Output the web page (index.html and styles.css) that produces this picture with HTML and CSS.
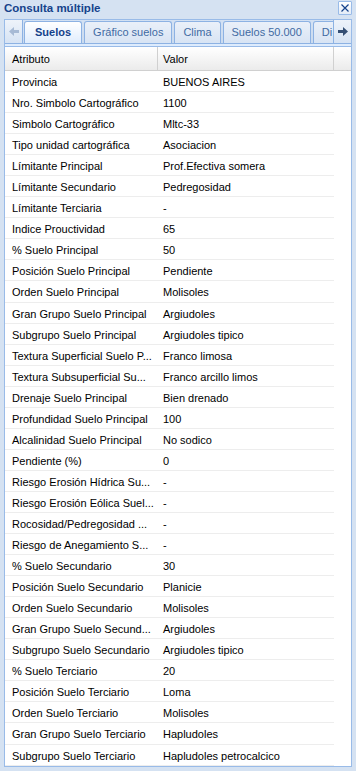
FILE: index.html
```html
<!DOCTYPE html>
<html lang="es">
<head>
  <meta charset="UTF-8" />
  <meta name="viewport" content="width=device-width, initial-scale=1.0"/>
  <title>Consulta múltiple</title>
  <link rel="stylesheet" href="styles.css">
</head>
<body>
  <div class="window">
    <div class="window-header">
      <span class="window-title">Consulta múltiple</span>
      <button class="tool-close" title="Cerrar">
        <svg width="12" height="12" viewBox="0 0 12 12">
          <path d="M2.5 2.5 L9.5 9.5 M9.5 2.5 L2.5 9.5" stroke="#15428b" stroke-width="1.2" fill="none"/>
        </svg>
      </button>
    </div>

    <div class="tabpanel">
      <div class="tab-strip">
        <div class="tab-scroller scroller-left disabled">
          <svg width="10" height="9" viewBox="0 0 10 9"><path d="M0 4.5 L5 0 V3 H10 V6 H5 V9 Z"/></svg>
        </div>
        <ul class="tabs">
          <li class="tab active">Suelos</li>
          <li class="tab">Gráfico suelos</li>
          <li class="tab">Clima</li>
          <li class="tab">Suelos 50.000</li>
          <li class="tab">Di</li>
        </ul>
        <div class="tab-scroller scroller-right">
          <svg width="10" height="9" viewBox="0 0 10 9"><path d="M10 4.5 L5 0 V3 H0 V6 H5 V9 Z"/></svg>
        </div>
      </div>
      <div class="tab-spacer"></div>

      <div class="grid">
        <div class="grid-header">
          <div class="hd col-attr">Atributo</div>
          <div class="hd col-value">Valor</div>
          <div class="hd col-fill"></div>
        </div>
        <div class="grid-body">
          <div class="grid-row"><div class="cell col-attr">Provincia</div><div class="cell col-value">BUENOS AIRES</div></div>
          <div class="grid-row"><div class="cell col-attr">Nro. Simbolo Cartográfico</div><div class="cell col-value">1100</div></div>
          <div class="grid-row"><div class="cell col-attr">Simbolo Cartográfico</div><div class="cell col-value">Mltc-33</div></div>
          <div class="grid-row"><div class="cell col-attr">Tipo unidad cartográfica</div><div class="cell col-value">Asociacion</div></div>
          <div class="grid-row"><div class="cell col-attr">Límitante Principal</div><div class="cell col-value">Prof.Efectiva somera</div></div>
          <div class="grid-row"><div class="cell col-attr">Límitante Secundario</div><div class="cell col-value">Pedregosidad</div></div>
          <div class="grid-row"><div class="cell col-attr">Límitante Terciaria</div><div class="cell col-value">-</div></div>
          <div class="grid-row"><div class="cell col-attr">Indice Prouctividad</div><div class="cell col-value">65</div></div>
          <div class="grid-row"><div class="cell col-attr">% Suelo Principal</div><div class="cell col-value">50</div></div>
          <div class="grid-row"><div class="cell col-attr">Posición Suelo Principal</div><div class="cell col-value">Pendiente</div></div>
          <div class="grid-row"><div class="cell col-attr">Orden Suelo Principal</div><div class="cell col-value">Molisoles</div></div>
          <div class="grid-row"><div class="cell col-attr">Gran Grupo Suelo Principal</div><div class="cell col-value">Argiudoles</div></div>
          <div class="grid-row"><div class="cell col-attr">Subgrupo Suelo Principal</div><div class="cell col-value">Argiudoles tipico</div></div>
          <div class="grid-row"><div class="cell col-attr">Textura Superficial Suelo P...</div><div class="cell col-value">Franco limosa</div></div>
          <div class="grid-row"><div class="cell col-attr">Textura Subsuperficial Su...</div><div class="cell col-value">Franco arcillo limos</div></div>
          <div class="grid-row"><div class="cell col-attr">Drenaje Suelo Principal</div><div class="cell col-value">Bien drenado</div></div>
          <div class="grid-row"><div class="cell col-attr">Profundidad Suelo Principal</div><div class="cell col-value">100</div></div>
          <div class="grid-row"><div class="cell col-attr">Alcalinidad Suelo Principal</div><div class="cell col-value">No sodico</div></div>
          <div class="grid-row"><div class="cell col-attr">Pendiente (%)</div><div class="cell col-value">0</div></div>
          <div class="grid-row"><div class="cell col-attr">Riesgo Erosión Hídrica Su...</div><div class="cell col-value">-</div></div>
          <div class="grid-row"><div class="cell col-attr">Riesgo Erosión Eólica Suel...</div><div class="cell col-value">-</div></div>
          <div class="grid-row"><div class="cell col-attr">Rocosidad/Pedregosidad ...</div><div class="cell col-value">-</div></div>
          <div class="grid-row"><div class="cell col-attr">Riesgo de Anegamiento S...</div><div class="cell col-value">-</div></div>
          <div class="grid-row"><div class="cell col-attr">% Suelo Secundario</div><div class="cell col-value">30</div></div>
          <div class="grid-row"><div class="cell col-attr">Posición Suelo Secundario</div><div class="cell col-value">Planicie</div></div>
          <div class="grid-row"><div class="cell col-attr">Orden Suelo Secundario</div><div class="cell col-value">Molisoles</div></div>
          <div class="grid-row"><div class="cell col-attr">Gran Grupo Suelo Secund...</div><div class="cell col-value">Argiudoles</div></div>
          <div class="grid-row"><div class="cell col-attr">Subgrupo Suelo Secundario</div><div class="cell col-value">Argiudoles tipico</div></div>
          <div class="grid-row"><div class="cell col-attr">% Suelo Terciario</div><div class="cell col-value">20</div></div>
          <div class="grid-row"><div class="cell col-attr">Posición Suelo Terciario</div><div class="cell col-value">Loma</div></div>
          <div class="grid-row"><div class="cell col-attr">Orden Suelo Terciario</div><div class="cell col-value">Molisoles</div></div>
          <div class="grid-row"><div class="cell col-attr">Gran Grupo Suelo Terciario</div><div class="cell col-value">Hapludoles</div></div>
          <div class="grid-row"><div class="cell col-attr">Subgrupo Suelo Terciario</div><div class="cell col-value">Hapludoles petrocalcico</div></div>
        </div>
      </div>
    </div>
  </div>
</body>
</html>
```

FILE: styles.css
```css
body {
  margin: 0;
  font-family: 'Liberation Sans', Arial, sans-serif;
  font-size: 11px;
  color: #000;
}

.window {
  width: 356px;
  height: 771px;
  box-sizing: border-box;
  padding: 0 4px 4px 4px;
  background-color: #d5e2f2;
  display: flex;
  flex-direction: column;
  overflow: hidden;
}

/* title bar */
.window-header {
  height: 19px;
  display: flex;
  justify-content: space-between;
  align-items: flex-start;
}

.window-title {
  font-size: 11.5px;
  font-weight: bold;
  color: #15428b;
  line-height: 17px;
}

.tool-close {
  width: 14px;
  height: 14px;
  margin-top: 1px;
  padding: 0;
  border: 1px solid #99bbe8;
  border-radius: 1px;
  background: linear-gradient(#ffffff, #e3ecf8);
  display: flex;
  align-items: center;
  justify-content: center;
}

/* tab panel */
.tabpanel {
  flex: 1;
  display: flex;
  flex-direction: column;
  border: 1px solid #99bbe8;
  min-height: 0;
}

.tab-strip {
  height: 23px;
  display: flex;
  background: linear-gradient(#d3e1f3, #cbdbef);
  border-bottom: 1px solid #8db2e3;
}

.tab-scroller {
  width: 17px;
  flex: none;
  display: flex;
  align-items: center;
  justify-content: center;
  background: linear-gradient(#eef3fa, #d6e3f4);
  padding-bottom: 1px;
  position: relative;
  z-index: 1;
}

.scroller-left {
  border-right: 1px solid #8db2e3;
}

.scroller-right {
  border-left: 1px solid #8db2e3;
  fill: #354f74;
}

.tab-scroller.disabled {
  fill: #a7bad5;
}

.tabs {
  list-style: none;
  margin: 0;
  padding: 0 0 0 1px;
  flex: 1;
  display: flex;
  align-items: flex-end;
  gap: 2px;
  overflow: hidden;
  white-space: nowrap;
}

.tab {
  height: 21px;
  line-height: 20px;
  padding: 0 8px;
  border: 1px solid #8db2e3;
  border-bottom: none;
  border-radius: 3px 3px 0 0;
  background: linear-gradient(#eaf0f9, #d8e4f4);
  color: #416aa3;
  flex: none;
}

.tab:last-child {
  padding-right: 14px;
}

.tab.active {
  height: 22px;
  margin-bottom: -1px;
  padding: 0 10px;
  font-weight: bold;
  color: #15428b;
  background: linear-gradient(#ffffff, #deecfd);
}

.tab-spacer {
  height: 2px;
  background-color: #deecfd;
  border-bottom: 1px solid #99bbe8;
}

/* property grid */
.grid {
  flex: 1;
  display: flex;
  flex-direction: column;
  background-color: #ffffff;
  min-height: 0;
}

.grid-header {
  height: 23px;
  display: flex;
  background: linear-gradient(#ffffff, #ebebeb);
  border-bottom: 1px solid #d0d0d0;
}

.hd {
  line-height: 24px;
  box-sizing: border-box;
  border-right: 1px solid #d0d0d0;
}

.hd.col-fill {
  flex: 1;
  border-right: none;
}

.col-attr {
  width: 153px;
  padding-left: 7px;
  flex: none;
}

.col-value {
  width: 176px;
  padding-left: 5px;
  flex: none;
}

.grid-body {
  flex: 1;
  overflow: hidden;
}

.grid-row {
  width: 329px;
  height: 21.05px;
  box-sizing: border-box;
  display: flex;
  align-items: center;
  padding-top: 2px;
  border-bottom: 1px solid #ededed;
}

.cell {
  box-sizing: border-box;
  white-space: nowrap;
  overflow: hidden;
}

.cell.col-attr {
  padding-right: 3px;
}
```
